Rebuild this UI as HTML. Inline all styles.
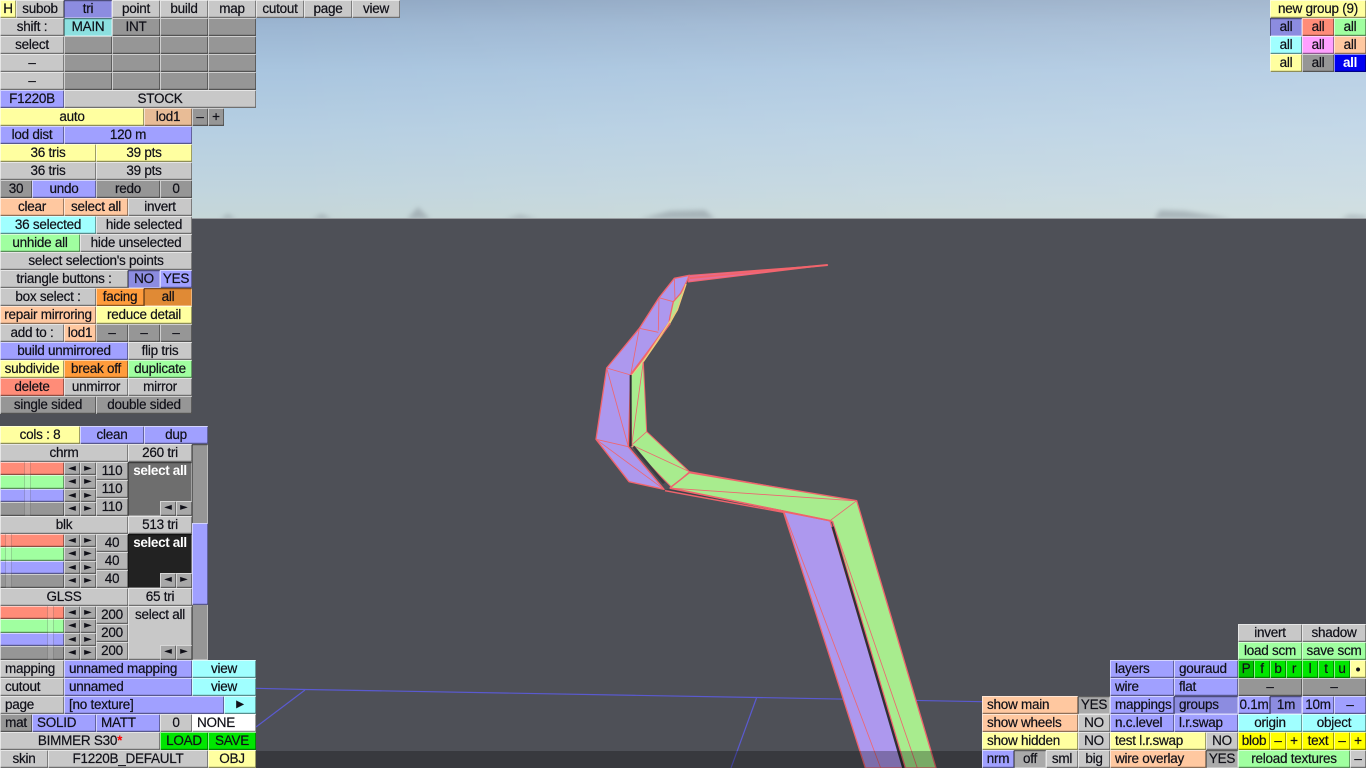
<!DOCTYPE html>
<html><head><meta charset="utf-8"><style>
html,body{margin:0;padding:0;width:1366px;height:768px;overflow:hidden;background:#4e5057}
#w{position:absolute;left:0;top:0;width:1366px;height:768px;overflow:hidden;filter:blur(.3px)}
#sky{position:absolute;left:0;top:0;width:1366px;height:218px;background:linear-gradient(180deg,#90a8c4 0,#9cb6d2 25px,#a9c5df 70px,#b6cfe2 130px,#c1d5de 190px,#c6d7d8 218px)}
#sky2{position:absolute;left:0;top:0;width:1366px;height:218px;background:linear-gradient(90deg,rgba(255,255,255,0) 20%,rgba(255,255,255,.2) 100%)}
svg{position:absolute;left:0;top:0}
.r{position:absolute;left:0;width:0;height:18px}
b{position:absolute;top:0;height:18px;box-sizing:border-box;font:normal 13.5px/18px "Liberation Sans",sans-serif;letter-spacing:-.25px;-webkit-text-stroke:.2px #101018;color:#101018;text-align:center;white-space:nowrap;overflow:hidden;box-shadow:inset 1px 1px 0 rgba(255,255,255,.55),inset -1px -1px 0 rgba(0,0,0,.38),inset 0 -2px 0 rgba(0,0,0,.1)}
.g{background:#c8c8c8}.d{background:#969696}.u{background:#a0a0ff}.y{background:#ffffa0}.p{background:#ffc8a0}.c{background:#a0ffff}.n{background:#a0ffa0}.e{background:#ff8c78}.o{background:#ff9c3c}.m{background:#ffa0ff}.t{background:#00e600}.v{background:#ffff00}.w{background:#fff}
.x{box-shadow:inset 1px 1px 0 rgba(0,0,0,.38),inset -1px -1px 0 rgba(255,255,255,.35),inset 0 2px 0 rgba(0,0,0,.1)}
.ux{background:#8c8ce0}.ox{background:#e08a35}.cx{background:#8ce0e0}.gx{background:#aaa}
.l{text-align:left;padding-left:5px}
.a{background:#a8a8a8;font:10px/13px "DejaVu Sans",sans-serif;letter-spacing:0;height:13px;-webkit-text-stroke:0}
.s{height:13px}
.s i{position:absolute;top:0;width:7px;height:100%;background:rgba(255,255,255,.12);border-left:1px solid rgba(0,0,0,.16);border-right:1px solid rgba(0,0,0,.16);box-sizing:border-box}
.k{color:#fff;font-weight:bold;-webkit-text-stroke:0;letter-spacing:-.35px}
</style></head><body><div id="w">
<div id="sky"></div><div id="sky2"></div>
<svg width="1366" height="768" viewBox="0 0 1366 768">
<defs><filter id="bl" x="-50%" y="-50%" width="200%" height="200%"><feGaussianBlur stdDeviation="2.5"/></filter></defs>
<g fill="#8a949c" opacity=".55" filter="url(#bl)">
<polygon points="220,219 228,214 236,219"/><polygon points="312,219 322,214 332,219"/><polygon points="407,219 418,207 430,219"/><polygon points="505,219 520,215 538,219"/><polygon points="640,219 670,211 705,210 715,219"/><polygon points="1154,219 1160,210 1185,211 1232,219"/><polygon points="1340,219 1350,215 1366,216 1366,219"/>
</g>
<rect x="0" y="218" width="1366" height="1" fill="#9a9ea2"/>
<rect x="0" y="219" width="1366" height="549" fill="#4e5057"/>
<g stroke="#5a5ad0" stroke-width="1.2" fill="none">
<path d="M256 688.3L305 689.5L756.5 697.5L982 701.7"/>
<path d="M305 690L256 727"/>
<path d="M756.5 698L731 768"/>
</g>
<!-- upper model -->
<g transform="translate(590,260) scale(.33333)" stroke-linejoin="round">
<polygon points="298,46 713,15 295,66" fill="#e0709c" stroke="#f2646c" stroke-width="3"/>
<path d="M300 54L713 15" stroke="#f2646c" stroke-width="6" fill="none"/>
<polygon points="160,305 170,515 298,635 745,715 420,720 245,682 125,560 122,345" fill="#a8ec8e" stroke="#f2646c" stroke-width="3"/>
<polygon points="288,72 262,150 237,195 160,305 125,345 237,180 250,125" fill="#b8e490" stroke="#e8d880" stroke-width="3"/>
<polygon points="253,55 298,46 290,65 272,100 250,125 240,170 237,188 122,345 115,560 222,688 117,665 18,538 50,324 148,205 207,113" fill="#ad98ee" stroke="#f2646c" stroke-width="4"/>
<g stroke="#ee6670" stroke-width="2.5" fill="none">
<path d="M253 55L255 120M207 113L250 125M207 113L205 212M148 205L205 217M148 205L122 345M50 324L122 345M50 324L115 560M18 538L115 560M18 538L222 688M115 560L222 688"/>
<path d="M125 555L160 305M125 555L170 515M125 555L298 635M298 635L245 682"/>
</g>
<path d="M122 345L122 558" stroke="#2f2f35" stroke-width="6" fill="none"/>
<path d="M125 340L240 190" stroke="#f2646c" stroke-width="6" fill="none"/>
<path d="M160 305L262 150L288 72" stroke="#f2c878" stroke-width="4" fill="none"/>
<path d="M130 560L222 670" stroke="#3a3b40" stroke-width="8" fill="none"/>
</g>
<!-- lower model -->
<g transform="translate(640,470) scale(.33333)" stroke-linejoin="round">
<polygon points="430,125 570,152 790,894 676,894" fill="#ad98ee" stroke="#f0646c" stroke-width="4"/>
<polygon points="148,8 650,92 888,894 796,894 578,155 570,152 90,54" fill="#a8ec8e" stroke="#f0646c" stroke-width="4"/>
<g stroke="#ee6670" stroke-width="2.5" fill="none">
<path d="M100 55L640 92M650 92L570 152M148 8L90 52M432 125L722 894M578 155L832 894"/>
</g>
<path d="M75 62L430 127" stroke="#f0646c" stroke-width="4" fill="none"/>
<path d="M80 58L430 122" stroke="#3a3b40" stroke-width="2" fill="none"/>
<path d="M90 54L570 152" stroke="#f0646c" stroke-width="5" fill="none"/>
<path d="M578 170L790 894" stroke="#2f2f35" stroke-width="7" fill="none"/>
</g>
<rect x="256" y="751" width="726" height="17" fill="#000" fill-opacity=".28"/>
</svg>

<!-- top left -->
<div class="r" style="top:0"><b class="y" style="left:0;width:16px">H</b><b class="g" style="left:16px;width:48px">subob</b><b class="u ux x" style="left:64px;width:48px">tri</b><b class="g" style="left:112px;width:48px">point</b><b class="g" style="left:160px;width:48px">build</b><b class="g" style="left:208px;width:48px">map</b><b class="g" style="left:256px;width:48px">cutout</b><b class="g" style="left:304px;width:48px">page</b><b class="g" style="left:352px;width:48px">view</b></div>
<div class="r" style="top:18px"><b class="g" style="left:0;width:64px">shift :</b><b class="cx x" style="left:64px;width:48px">MAIN</b><b class="d" style="left:112px;width:48px">INT</b><b class="d" style="left:160px;width:48px"></b><b class="d" style="left:208px;width:48px"></b></div>
<div class="r" style="top:36px"><b class="g" style="left:0;width:64px">select</b><b class="d" style="left:64px;width:48px"></b><b class="d" style="left:112px;width:48px"></b><b class="d" style="left:160px;width:48px"></b><b class="d" style="left:208px;width:48px"></b></div>
<div class="r" style="top:54px"><b class="g" style="left:0;width:64px">–</b><b class="d" style="left:64px;width:48px"></b><b class="d" style="left:112px;width:48px"></b><b class="d" style="left:160px;width:48px"></b><b class="d" style="left:208px;width:48px"></b></div>
<div class="r" style="top:72px"><b class="g" style="left:0;width:64px">–</b><b class="d" style="left:64px;width:48px"></b><b class="d" style="left:112px;width:48px"></b><b class="d" style="left:160px;width:48px"></b><b class="d" style="left:208px;width:48px"></b></div>
<div class="r" style="top:90px"><b class="u" style="left:0;width:64px">F1220B</b><b class="g" style="left:64px;width:192px">STOCK</b></div>
<div class="r" style="top:108px"><b class="y" style="left:0;width:144px">auto</b><b class="p" style="left:144px;width:48px;background:#e8bc96">lod1</b><b class="d" style="left:192px;width:16px">–</b><b class="d" style="left:208px;width:16px">+</b></div>
<div class="r" style="top:126px"><b class="u" style="left:0;width:64px">lod dist</b><b class="u" style="left:64px;width:128px">120 m</b></div>
<div class="r" style="top:144px"><b class="y" style="left:0;width:96px">36 tris</b><b class="y" style="left:96px;width:96px">39 pts</b></div>
<div class="r" style="top:162px"><b class="g" style="left:0;width:96px">36 tris</b><b class="g" style="left:96px;width:96px">39 pts</b></div>
<div class="r" style="top:180px"><b class="d" style="left:0;width:32px">30</b><b class="u" style="left:32px;width:64px">undo</b><b class="d" style="left:96px;width:64px">redo</b><b class="d" style="left:160px;width:32px">0</b></div>
<div class="r" style="top:198px"><b class="p" style="left:0;width:64px">clear</b><b class="p" style="left:64px;width:64px">select all</b><b class="g" style="left:128px;width:64px">invert</b></div>
<div class="r" style="top:216px"><b class="c" style="left:0;width:96px">36 selected</b><b class="g" style="left:96px;width:96px">hide selected</b></div>
<div class="r" style="top:234px"><b class="n" style="left:0;width:80px">unhide all</b><b class="g" style="left:80px;width:112px">hide unselected</b></div>
<div class="r" style="top:252px"><b class="g" style="left:0;width:192px">select selection's points</b></div>
<div class="r" style="top:270px"><b class="g" style="left:0;width:128px">triangle buttons :</b><b class="ux x" style="left:128px;width:32px">NO</b><b class="u" style="left:160px;width:32px">YES</b></div>
<div class="r" style="top:288px"><b class="g" style="left:0;width:96px">box select :</b><b class="o" style="left:96px;width:48px">facing</b><b class="ox x" style="left:144px;width:48px">all</b></div>
<div class="r" style="top:306px"><b class="p" style="left:0;width:96px">repair mirroring</b><b class="y" style="left:96px;width:96px">reduce detail</b></div>
<div class="r" style="top:324px"><b class="g" style="left:0;width:64px">add to :</b><b class="p" style="left:64px;width:32px">lod1</b><b class="d" style="left:96px;width:32px">–</b><b class="d" style="left:128px;width:32px">–</b><b class="d" style="left:160px;width:32px">–</b></div>
<div class="r" style="top:342px"><b class="u" style="left:0;width:128px">build unmirrored</b><b class="g" style="left:128px;width:64px">flip tris</b></div>
<div class="r" style="top:360px"><b class="y" style="left:0;width:64px">subdivide</b><b class="o" style="left:64px;width:64px">break off</b><b class="n" style="left:128px;width:64px">duplicate</b></div>
<div class="r" style="top:378px"><b class="e" style="left:0;width:64px">delete</b><b class="g" style="left:64px;width:64px">unmirror</b><b class="g" style="left:128px;width:64px">mirror</b></div>
<div class="r" style="top:396px"><b class="d" style="left:0;width:96px">single sided</b><b class="d" style="left:96px;width:96px">double sided</b></div>

<!-- material panel -->
<div class="r" style="top:426px"><b class="y" style="left:0;width:80px">cols : 8</b><b class="u" style="left:80px;width:64px">clean</b><b class="u" style="left:144px;width:64px">dup</b></div>
<div class="r" style="top:444px"><b class="g" style="left:0;width:128px">chrm</b><b class="g" style="left:128px;width:64px">260 tri</b><b class="d x" style="left:192px;width:16px;height:216px"></b></div>
<b class="u" style="left:192px;top:523px;width:16px;height:82px"></b>

<div class="r" style="top:462px"><b class="e s" style="left:0;width:64px"><i style="left:24px"></i></b><b class="a" style="left:64px;width:16px">◄</b><b class="a" style="left:80px;width:16px">►</b><b class="g" style="left:96px;width:32px;background:#b4b4b4">110</b><b class="k x" style="left:128px;width:64px;height:54px;background:#6e6e6e">select all</b></div>
<div class="r" style="top:475px"><b class="n s" style="left:0;width:64px;height:14px"><i style="left:24px"></i></b><b class="a" style="left:64px;width:16px;height:14px">◄</b><b class="a" style="left:80px;width:16px;height:14px">►</b></div>
<div class="r" style="top:480px"><b class="g" style="left:96px;width:32px;background:#b4b4b4">110</b></div>
<div class="r" style="top:489px"><b class="u s" style="left:0;width:64px"><i style="left:24px"></i></b><b class="a" style="left:64px;width:16px">◄</b><b class="a" style="left:80px;width:16px">►</b></div>
<div class="r" style="top:502px"><b class="d s" style="left:0;width:64px;height:14px"><i style="left:24px"></i></b><b class="a" style="left:64px;width:16px;height:14px">◄</b><b class="a" style="left:80px;width:16px;height:14px">►</b></div>
<div class="r" style="top:498px"><b class="g" style="left:96px;width:32px;background:#b4b4b4">110</b><b class="a" style="left:160px;top:3px;width:16px;height:15px">◄</b><b class="a" style="left:176px;top:3px;width:16px;height:15px">►</b></div>

<div class="r" style="top:516px"><b class="g" style="left:0;width:128px">blk</b><b class="g" style="left:128px;width:64px">513 tri</b></div>
<div class="r" style="top:534px"><b class="e s" style="left:0;width:64px"><i style="left:5px"></i></b><b class="a" style="left:64px;width:16px">◄</b><b class="a" style="left:80px;width:16px">►</b><b class="g" style="left:96px;width:32px;background:#b4b4b4">40</b><b class="k x" style="left:128px;width:64px;height:54px;background:#222">select all</b></div>
<div class="r" style="top:547px"><b class="n s" style="left:0;width:64px;height:14px"><i style="left:5px"></i></b><b class="a" style="left:64px;width:16px;height:14px">◄</b><b class="a" style="left:80px;width:16px;height:14px">►</b></div>
<div class="r" style="top:552px"><b class="g" style="left:96px;width:32px;background:#b4b4b4">40</b></div>
<div class="r" style="top:561px"><b class="u s" style="left:0;width:64px"><i style="left:5px"></i></b><b class="a" style="left:64px;width:16px">◄</b><b class="a" style="left:80px;width:16px">►</b></div>
<div class="r" style="top:574px"><b class="d s" style="left:0;width:64px;height:14px"><i style="left:5px"></i></b><b class="a" style="left:64px;width:16px;height:14px">◄</b><b class="a" style="left:80px;width:16px;height:14px">►</b></div>
<div class="r" style="top:570px"><b class="g" style="left:96px;width:32px;background:#b4b4b4">40</b><b class="a" style="left:160px;top:3px;width:16px;height:15px">◄</b><b class="a" style="left:176px;top:3px;width:16px;height:15px">►</b></div>

<div class="r" style="top:588px"><b class="g" style="left:0;width:128px">GLSS</b><b class="g" style="left:128px;width:64px">65 tri</b></div>
<div class="r" style="top:606px"><b class="e s" style="left:0;width:64px"><i style="left:47px"></i></b><b class="a" style="left:64px;width:16px">◄</b><b class="a" style="left:80px;width:16px">►</b><b class="g" style="left:96px;width:32px;background:#b4b4b4">200</b><b class="g" style="left:128px;width:64px;height:54px">select all</b></div>
<div class="r" style="top:619px"><b class="n s" style="left:0;width:64px;height:14px"><i style="left:47px"></i></b><b class="a" style="left:64px;width:16px;height:14px">◄</b><b class="a" style="left:80px;width:16px;height:14px">►</b></div>
<div class="r" style="top:624px"><b class="g" style="left:96px;width:32px;background:#b4b4b4">200</b></div>
<div class="r" style="top:633px"><b class="u s" style="left:0;width:64px"><i style="left:47px"></i></b><b class="a" style="left:64px;width:16px">◄</b><b class="a" style="left:80px;width:16px">►</b></div>
<div class="r" style="top:646px"><b class="d s" style="left:0;width:64px;height:14px"><i style="left:47px"></i></b><b class="a" style="left:64px;width:16px;height:14px">◄</b><b class="a" style="left:80px;width:16px;height:14px">►</b></div>
<div class="r" style="top:642px"><b class="g" style="left:96px;width:32px;background:#b4b4b4">200</b><b class="a" style="left:160px;top:3px;width:16px;height:15px">◄</b><b class="a" style="left:176px;top:3px;width:16px;height:15px">►</b></div>

<div class="r" style="top:660px"><b class="g l" style="left:0;width:64px">mapping</b><b class="u l" style="left:64px;width:128px">unnamed mapping</b><b class="c" style="left:192px;width:64px">view</b></div>
<div class="r" style="top:678px"><b class="g l" style="left:0;width:64px">cutout</b><b class="u l" style="left:64px;width:128px">unnamed</b><b class="c" style="left:192px;width:64px">view</b></div>
<div class="r" style="top:696px"><b class="g l" style="left:0;width:64px">page</b><b class="u l" style="left:64px;width:160px">[no texture]</b><b class="c" style="left:224px;width:32px;font-size:10px">▶</b></div>
<div class="r" style="top:714px"><b class="d" style="left:0;width:32px">mat</b><b class="u l" style="left:32px;width:64px">SOLID</b><b class="u l" style="left:96px;width:64px">MATT</b><b class="g" style="left:160px;width:32px">0</b><b class="w l" style="left:192px;width:64px">NONE</b></div>
<div class="r" style="top:732px"><b class="g" style="left:0;width:160px">BIMMER S30<span style="color:#f00;font-weight:bold;-webkit-text-stroke:0">*</span></b><b class="t" style="left:160px;width:48px">LOAD</b><b class="t" style="left:208px;width:48px">SAVE</b></div>
<div class="r" style="top:750px"><b class="g" style="left:0;width:48px">skin</b><b class="g" style="left:48px;width:160px">F1220B_DEFAULT</b><b class="y" style="left:208px;width:48px">OBJ</b></div>

<!-- top right -->
<div class="r" style="top:0"><b class="y" style="left:1270px;width:96px">new group (9)</b></div>
<div class="r" style="top:18px"><b class="ux x" style="left:1270px;width:32px">all</b><b class="e" style="left:1302px;width:32px">all</b><b class="n" style="left:1334px;width:32px">all</b></div>
<div class="r" style="top:36px"><b class="c" style="left:1270px;width:32px">all</b><b class="m" style="left:1302px;width:32px">all</b><b class="p" style="left:1334px;width:32px">all</b></div>
<div class="r" style="top:54px"><b class="y" style="left:1270px;width:32px">all</b><b class="d" style="left:1302px;width:32px">all</b><b class="k" style="left:1334px;width:32px;background:#0000f0">all</b></div>

<!-- bottom right -->
<div class="r" style="top:624px"><b class="g" style="left:1238px;width:64px">invert</b><b class="g" style="left:1302px;width:64px">shadow</b></div>
<div class="r" style="top:642px"><b class="n" style="left:1238px;width:64px">load scm</b><b class="n" style="left:1302px;width:64px">save scm</b></div>
<div class="r" style="top:660px"><b class="u l" style="left:1110px;width:64px">layers</b><b class="u l" style="left:1174px;width:64px">gouraud</b><b class="t" style="left:1238px;width:16px;background:#00c400">P</b><b class="t" style="left:1254px;width:16px">f</b><b class="t" style="left:1270px;width:16px">b</b><b class="t" style="left:1286px;width:16px">r</b><b class="t" style="left:1302px;width:16px">l</b><b class="t" style="left:1318px;width:16px">t</b><b class="t" style="left:1334px;width:16px">u</b><b class="y" style="left:1350px;width:16px;font-size:9px">●</b></div>
<div class="r" style="top:678px"><b class="u l" style="left:1110px;width:64px">wire</b><b class="u l" style="left:1174px;width:64px">flat</b><b class="d" style="left:1238px;width:64px">–</b><b class="d" style="left:1302px;width:64px">–</b></div>
<div class="r" style="top:696px"><b class="p l" style="left:982px;width:96px">show main</b><b class="gx x" style="left:1078px;width:32px">YES</b><b class="u l" style="left:1110px;width:64px">mappings</b><b class="ux x l" style="left:1174px;width:64px">groups</b><b class="u" style="left:1238px;width:32px">0.1m</b><b class="ux x" style="left:1270px;width:32px">1m</b><b class="u" style="left:1302px;width:32px">10m</b><b class="u" style="left:1334px;width:32px">–</b></div>
<div class="r" style="top:714px"><b class="p l" style="left:982px;width:96px">show wheels</b><b class="g" style="left:1078px;width:32px">NO</b><b class="u l" style="left:1110px;width:64px">n.c.level</b><b class="u l" style="left:1174px;width:64px">l.r.swap</b><b class="c" style="left:1238px;width:64px">origin</b><b class="c" style="left:1302px;width:64px">object</b></div>
<div class="r" style="top:732px"><b class="y l" style="left:982px;width:96px">show hidden</b><b class="g" style="left:1078px;width:32px">NO</b><b class="y l" style="left:1110px;width:96px">test l.r.swap</b><b class="g" style="left:1206px;width:32px">NO</b><b class="v" style="left:1238px;width:32px">blob</b><b class="v" style="left:1270px;width:16px">–</b><b class="v" style="left:1286px;width:16px">+</b><b class="v" style="left:1302px;width:32px">text</b><b class="v" style="left:1334px;width:16px">–</b><b class="v" style="left:1350px;width:16px">+</b></div>
<div class="r" style="top:750px"><b class="u" style="left:982px;width:32px">nrm</b><b class="gx x" style="left:1014px;width:32px">off</b><b class="g" style="left:1046px;width:32px">sml</b><b class="g" style="left:1078px;width:32px">big</b><b class="p l" style="left:1110px;width:96px">wire overlay</b><b class="gx x" style="left:1206px;width:32px">YES</b><b class="n" style="left:1238px;width:112px">reload textures</b><b class="g" style="left:1350px;width:16px">–</b></div>
</div></body></html>
